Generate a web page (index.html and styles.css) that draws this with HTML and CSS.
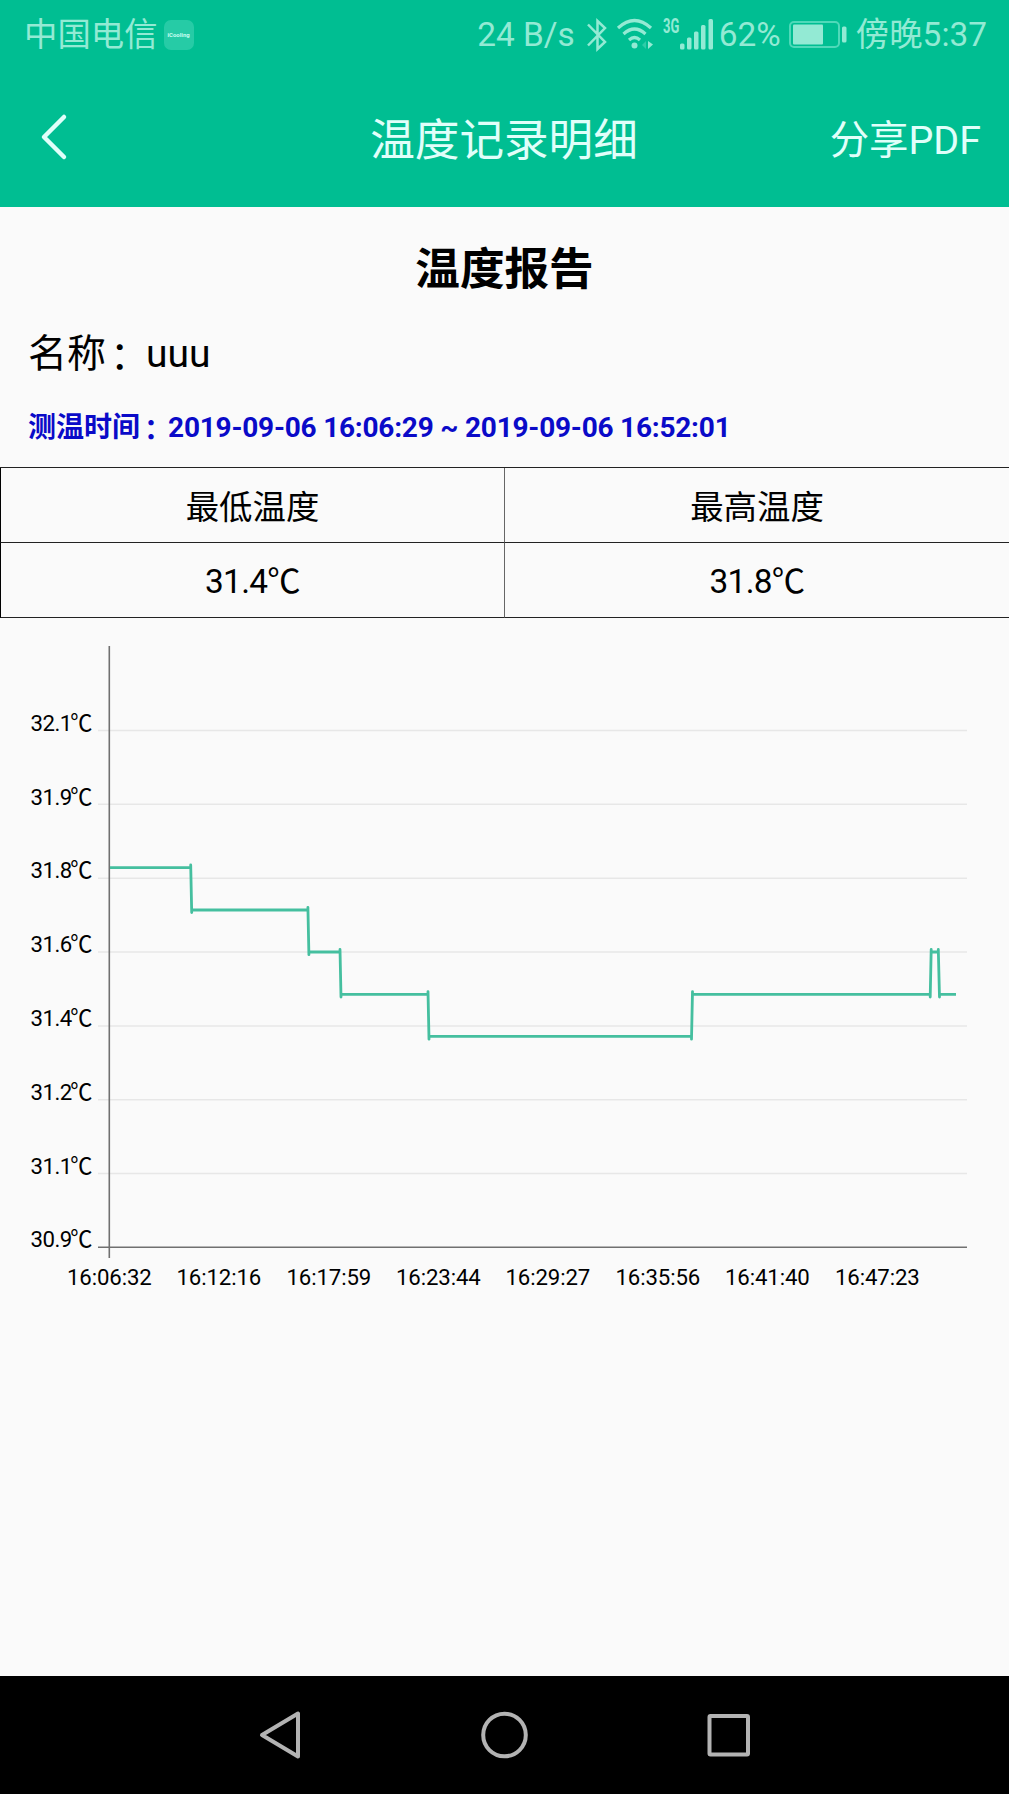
FILE: index.html
```
<!DOCTYPE html>
<html lang="zh-CN">
<head>
    <meta charset="utf-8">
    <meta name="viewport" content="width=device-width, initial-scale=1.0">
    <title>温度记录明细</title>
    <link rel="stylesheet" href="styles.css">
</head>
<body>
    <header>
        <div class="status">
            <span class="carrier">中国电信</span>
            <span class="app-icon">iCooling</span>
            <span class="speed">24 B/s</span>
            <svg class="bluetooth" width="20" height="34" viewBox="0 0 20 34">
                <path d="M1 6.500L18 24L10.500 31V3L18 10L1 27.500"/>
            </svg>
            <svg class="wifi" width="38" height="34" viewBox="0 0 38 34">
                <path d="M2 10Q18.500 -5 35 10M7.500 16Q18.500 6 29.500 16M13 22Q18.500 17 24 22"/>
                <circle cx="18.500" cy="27.500" r="3"/>
                <polygon class="dim" points="30,23 30,31 26,27"/>
                <polygon points="32,23 37,26.500 32,31"/>
            </svg>
            <span class="net">3G</span>
            <svg class="signal" width="34" height="34" viewBox="0 0 34 34">
                <rect x="0" y="25.500" width="4.500" height="6" rx="1.500"/>
                <rect x="7" y="19.500" width="4.500" height="12" rx="1.500"/>
                <rect x="14" y="13.500" width="4.500" height="18" rx="1.500"/>
                <rect x="21" y="7" width="4.500" height="24.500" rx="1.500"/>
                <rect x="28.500" y="1" width="4.500" height="30.500" rx="1.500"/>
            </svg>
            <span class="percent">62%</span>
            <svg class="battery" width="58" height="30" viewBox="0 0 58 30">
                <rect class="shell" x="1" y="2" width="49" height="25" rx="4"/>
                <rect x="4" y="4.500" width="30" height="20" rx="1"/>
                <rect x="53" y="6.500" width="4.500" height="16" rx="1.500"/>
            </svg>
            <span class="time">傍晚5:37</span>
        </div>
        <div class="navbar">
            <svg class="back" width="30" height="50" viewBox="0 0 30 50">
                <path d="M25 5L5 25L25 45"/>
            </svg>
            <h1>温度记录明细</h1>
            <span class="share">分享PDF</span>
        </div>
    </header>

    <main>
        <h2>温度报告</h2>
        <p class="name">名称<span class="colon">：</span>uuu</p>
        <p class="period">测温时间<span class="colon">：</span><span class="dates">2019-09-06 16:06:29 ~ 2019-09-06 16:52:01</span></p>
        <div class="summary">
            <div>最低温度</div>
            <div>最高温度</div>
            <div class="value">31.4℃</div>
            <div class="value">31.8℃</div>
        </div>

        <!-- Temperature chart -->
        <svg class="chart" width="1009" height="680" viewBox="0 620 1009 680">
            <g class="grid">
                <path d="M98 730.500H967"/>
                <path d="M98 804.300H967"/>
                <path d="M98 878.200H967"/>
                <path d="M98 952H967"/>
                <path d="M98 1025.900H967"/>
                <path d="M98 1099.700H967"/>
                <path d="M98 1173.500H967"/>
            </g>
            <path class="axis" d="M109.300 646V1258M98 1247.300H967"/>
            <g class="line">
                <path d="M110 867.700H191M191.500 910H308.500M309 952H340.500M341 994.300H428.500M429 1036.400H691.500M692 994.300H930.500M931 952H938.500M939.500 994.300H956"/>
                <path class="step" d="M190.700 865L191.700 912.500M307.900 907.300L308.900 954.700M340 949.500L341 997M428 991.600L429 1039.200M691.500 1039.200L692.500 991.600M930.200 997L931.200 949.500M938.300 949.500L939.500 997"/>
            </g>
            <g class="y-labels">
                <text x="92" y="731">32.1<tspan dx="-1.500">℃</tspan></text>
                <text x="92" y="804.500">31.9<tspan dx="-1.500">℃</tspan></text>
                <text x="92" y="878.300">31.8<tspan dx="-1.500">℃</tspan></text>
                <text x="92" y="952.300">31.6<tspan dx="-1.500">℃</tspan></text>
                <text x="92" y="1026.300">31.4<tspan dx="-1.500">℃</tspan></text>
                <text x="92" y="1100">31.2<tspan dx="-1.500">℃</tspan></text>
                <text x="92" y="1173.800">31.1<tspan dx="-1.500">℃</tspan></text>
                <text x="92" y="1247.300">30.9<tspan dx="-1.500">℃</tspan></text>
            </g>
            <g class="x-labels">
                <text x="109.300" y="1285">16:06:32</text>
                <text x="218.800" y="1285">16:12:16</text>
                <text x="328.800" y="1285">16:17:59</text>
                <text x="438.300" y="1285">16:23:44</text>
                <text x="547.800" y="1285">16:29:27</text>
                <text x="657.800" y="1285">16:35:56</text>
                <text x="767.300" y="1285">16:41:40</text>
                <text x="877.300" y="1285">16:47:23</text>
            </g>
        </svg>
    </main>

    <!-- System buttons -->
    <footer>
        <svg width="50" height="50" viewBox="0 0 50 50"><path d="M43 3.500V46.500L7 25Z"/></svg>
        <svg width="50" height="50" viewBox="0 0 50 50"><circle cx="24.500" cy="25" r="21.300"/></svg>
        <svg width="50" height="50" viewBox="0 0 50 50"><rect x="5.500" y="6" width="38.500" height="38.500" rx="1"/></svg>
    </footer>
</body>
</html>
```

FILE: styles.css
```
* {
    box-sizing: border-box;
}

body {
    margin: 0;
    height: 1794px;
    display: flex;
    flex-direction: column;
    background: #fafafa;
    color: #000;
    font-family: Roboto, "Noto Sans CJK SC", sans-serif;
}

h1, h2, p {
    margin: 0;
    white-space: nowrap;
}

header {
    height: 207px;
    background: #00be92;
    color: #e0fffa;
}

.status {
    height: 70px;
    padding: 0 22px 0 24px;
    display: flex;
    align-items: center;
    color: #93ead4;
    font-size: 33.400px;
    line-height: 70px;
    white-space: nowrap;
}

.status svg {
    flex: none;
    fill: #93ead4;
}

.app-icon {
    width: 30px;
    height: 30px;
    margin-left: 6px;
    border-radius: 7px;
    background: #26cba6;
    color: #c8fff2;
    font-size: 6px;
    font-weight: bold;
    line-height: 29px;
    text-align: center;
}

.speed {
    margin-left: auto;
}

.status .bluetooth {
    margin-left: 12px;
    fill: none;
    stroke: #93ead4;
    stroke-width: 2.5;
}

.wifi {
    margin-left: 9px;
}

.wifi path {
    fill: none;
    stroke: #93ead4;
    stroke-width: 3.2;
}

.wifi .dim {
    fill: #2fcca8;
}

.net {
    width: 17px;
    height: 34px;
    margin-left: 9px;
    font-size: 20px;
    font-weight: bold;
    line-height: 16px;
    transform: scaleX(0.650);
    transform-origin: left;
}

.percent {
    margin-left: 5px;
}

.battery {
    margin-left: 8px;
}

.battery .shell {
    fill: none;
    stroke: #4fd9b9;
    stroke-width: 2;
}

.time {
    margin-left: 9px;
}

.navbar {
    height: 134px;
    padding: 0 28px 0 39px;
    display: grid;
    grid-template-columns: 1fr auto 1fr;
    align-items: center;
}

.back {
    fill: none;
    stroke: #e0fffa;
    stroke-width: 4.5;
    stroke-linecap: round;
    stroke-linejoin: round;
}

h1 {
    margin: -2px 12px 0 0;
    font-size: 44.600px;
    font-weight: normal;
}

.share {
    justify-self: end;
    margin-top: -2px;
    font-size: 39.400px;
}

main {
    flex: 1;
}

h2 {
    margin-top: 36px;
    font-size: 44.600px;
    line-height: 54px;
    text-align: center;
}

.name {
    margin-top: 31px;
    padding-left: 28px;
    font-size: 39px;
    line-height: 52px;
}

.colon {
    padding-left: 4px;
    letter-spacing: -3px;
    line-height: 1;
    vertical-align: -2px;
}

.period {
    margin-top: 28px;
    padding-left: 28px;
    color: #0a0ac8;
    font-size: 28px;
    font-weight: bold;
    line-height: 40px;
}

.period .colon {
    letter-spacing: -4px;
}

.dates {
    letter-spacing: -0.220px;
}

.summary {
    margin-top: 19px;
    display: grid;
    grid-template-columns: 505px 504px;
    grid-template-rows: 75px 75px;
    border-top: 1px solid #222;
    font-size: 33.400px;
    line-height: 79px;
    text-align: center;
}

.summary div {
    height: 75px;
    border-bottom: 1px solid #222;
}

.summary div:nth-child(odd) {
    border-left: 1px solid #000;
    border-right: 1px solid #666;
}

.summary .value {
    letter-spacing: -0.700px;
    line-height: 77px;
}

.chart {
    display: block;
    margin-top: 2px;
    font-size: 22.200px;
}

.grid {
    stroke: #e7e7e7;
    stroke-width: 1.500;
}

.axis {
    fill: none;
    stroke: #707070;
    stroke-width: 1.600;
}

.line {
    fill: none;
    stroke: #45bf9f;
    stroke-width: 2.800;
}

.step {
    stroke-linecap: round;
}

.y-labels {
    text-anchor: end;
    letter-spacing: -0.500px;
}

.x-labels {
    text-anchor: middle;
    letter-spacing: -0.100px;
}

footer {
    height: 118px;
    padding: 0 255px;
    display: flex;
    align-items: center;
    justify-content: space-between;
    background: #000;
}

footer svg {
    fill: none;
    stroke: #b3b3b3;
    stroke-width: 4;
    stroke-linejoin: round;
}
```
